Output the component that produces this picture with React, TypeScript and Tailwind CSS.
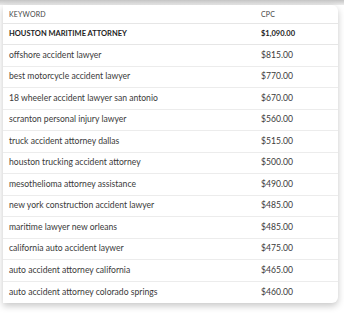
import React from 'react';

const rows: [string, string][] = [
  ['offshore accident lawyer', '$815.00'],
  ['best motorcycle accident lawyer', '$770.00'],
  ['18 wheeler accident lawyer san antonio', '$670.00'],
  ['scranton personal injury lawyer', '$560.00'],
  ['truck accident attorney dallas', '$515.00'],
  ['houston trucking accident attorney', '$500.00'],
  ['mesothelioma attorney assistance', '$490.00'],
  ['new york construction accident lawyer', '$485.00'],
  ['maritime lawyer new orleans', '$485.00'],
  ['california auto accident laywer', '$475.00'],
  ['auto accident attorney california', '$465.00'],
  ['auto accident attorney colorado springs', '$460.00'],
];

const App = () => {
  return (
    <div className="w-[344px] h-[315px] bg-white overflow-hidden" style={{ fontFamily: 'Lato, "Open Sans", sans-serif' }}>
      <div className="h-[5px] bg-gradient-to-b from-[#c4c4c4] to-[#ececec]" />
      <div className="ml-[3px] mr-[6px] bg-white rounded-br-md rounded-tr-md shadow-[0_3px_7px_rgba(0,0,0,0.22)] text-[#333]">
        {/* Header */}
        <div className="flex items-center h-[19px] border-b border-[#e6e6e6] text-[7px] tracking-wide text-[#444]">
          <div className="flex-1 pl-[6px]">KEYWORD</div>
          <div className="w-[77px]">CPC</div>
        </div>
        <div className="flex items-center h-[21px] border-b border-[#e6e6e6] text-[7.5px] font-bold text-[#222]">
          <div className="flex-1 pl-[6px]">HOUSTON MARITIME ATTORNEY</div>
          <div className="w-[77px]">$1,090.00</div>
        </div>
        {rows.map(([kw, cpc], i) => (
          <div
            key={kw}
            className={`flex items-center h-[21.5px] text-[8.6px] text-[#3a3a3a] ${i < rows.length - 1 ? 'border-b border-[#ececec]' : ''}`}
          >
            <div className="flex-1 pl-[6px]">{kw}</div>
            <div className="w-[77px]">{cpc}</div>
          </div>
        ))}
      </div>
    </div>
  );
};

export default App;
